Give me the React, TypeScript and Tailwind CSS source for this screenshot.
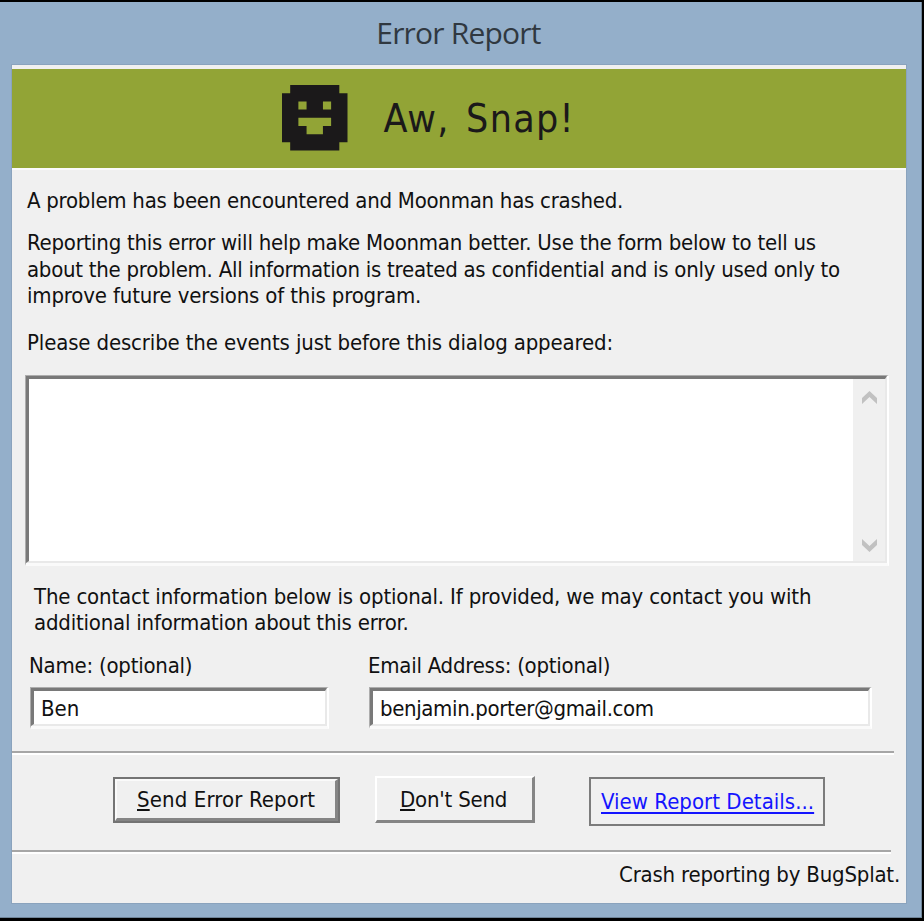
import type { ReactNode } from "react";

function Line({ className = "", children }: { className?: string; children: ReactNode }) {
  return <div className={`whitespace-nowrap ${className}`}>{children}</div>;
}

function Accel({ children }: { children: ReactNode }) {
  return (
    <span className="underline decoration-2 underline-offset-[2px] [text-decoration-skip-ink:none]">{children}</span>
  );
}

function PixelFace() {
  return (
    <svg viewBox="0 0 8 8" className="ml-[270px] mt-4 h-[65.5px] w-[65.5px] shrink-0" fill="#1b191a">
      <path
        fillRule="evenodd"
        d="M1 0H7V1H8V7H7V8H1V7H0V1H1ZM2 2V3H3V2ZM5 2V3H6V2ZM2 4V5H3V6H5V5H6V4Z"
      />
    </svg>
  );
}

function Divider({ className = "" }: { className?: string }) {
  return <div className={`h-1 shrink-0 border-b-2 border-t-2 border-b-white border-t-[#a6a6a6] ${className}`} />;
}

// Two-tone sunken bevel: a light outer frame around a darker inner one.
function Sunken({ className = "", inner = "", children }: { className?: string; inner?: string; children: ReactNode }) {
  return (
    <div className={`border-b-[3px] border-l border-r-2 border-t border-b-[#fafafa] border-l-[#adadad] border-r-white border-t-[#adadad] ${className}`}>
      <div className={`h-full border-b-2 border-l-[3px] border-r-2 border-t-[3px] border-b-[#e9e9e9] border-l-[#797979] border-r-[#e9e9e9] border-t-[#797979] bg-white ${inner}`}>
        {children}
      </div>
    </div>
  );
}

export default function App() {
  return (
    <div className="flex h-[921px] w-[924px] flex-col bg-black pr-[2px] pt-[2px] font-['DejaVu_Sans_Condensed','DejaVu_Sans',sans-serif] text-[22px] leading-[26px] text-[#111]">
      <div className="flex h-[916px] flex-col border-b border-r border-[#6f8498] bg-[#94afca] pl-[11px]">
        <div className="flex h-[62px] items-start justify-center pr-[15px] pt-[10px] font-['Open_Sans',sans-serif] text-[30px] leading-[42px] tracking-[-0.8px] text-[#303840]">
          Error Report
        </div>

        <div className="flex h-[840px] w-[896px] flex-col border border-[#8aa3bd] bg-[#f0f0f0]">
          <div className="mt-[4px] flex h-[99px] shrink-0 bg-[#92a436]">
            <PixelFace />
            <div className="ml-[36px] mt-[27px] whitespace-nowrap text-[39px] leading-[46px] tracking-[1.3px] text-[#1b191a] [word-spacing:4px]">
              Aw, Snap!
            </div>
          </div>
          <div className="h-[2px] shrink-0 bg-[#fbfbfb]" />

          <div className="ml-[15px] mt-[18px]">
            <Line className="tracking-[-0.26px]">A problem has been encountered and Moonman has crashed.</Line>
            <div className="mt-4 leading-[26.5px]">
              <Line className="tracking-[-0.238px]">Reporting this error will help make Moonman better. Use the form below to tell us</Line>
              <Line className="tracking-[-0.26px]">about the problem. All information is treated as confidential and is only used only to</Line>
              <Line className="tracking-[-0.164px]">improve future versions of this program.</Line>
            </div>
            <Line className="mt-5 tracking-[-0.148px]">Please describe the events just before this dialog appeared:</Line>
          </div>

          <Sunken className="ml-[13px] mt-[19px] h-[191px] w-[864px] shrink-0" inner="flex justify-end">
            <div className="flex w-8 flex-col items-center justify-between bg-[#f0f0f0] pb-[9px] pt-[12px]">
              <svg viewBox="0 0 15 13" className="h-[13px] w-[15px]" fill="#c1c1c1">
                <path d="M7.5 0L15 7V13L7.5 6L0 13V7Z" />
              </svg>
              <svg viewBox="0 0 15 13" className="h-[13px] w-[15px]" fill="#c1c1c1">
                <path d="M7.5 13L15 6V0L7.5 7L0 0V6Z" />
              </svg>
            </div>
          </Sunken>

          <div className="ml-[22px] mt-[18px] leading-[26.5px]">
            <Line className="tracking-[-0.175px]">The contact information below is optional. If provided, we may contact you with</Line>
            <Line className="tracking-[-0.21px]">additional information about this error.</Line>
          </div>

          <div className="mt-4 flex">
            <div className="ml-[18px] w-[339px]">
              <Line className="-ml-px tracking-[-0.23px]">Name: (optional)</Line>
              <Sunken className="mt-[8px] h-[42px] w-[299px]" inner="pl-[7px] pt-[5px]">Ben</Sunken>
            </div>
            <div>
              <Line className="-ml-px tracking-[-0.25px]">Email Address: (optional)</Line>
              <Sunken className="mt-[8px] h-[42px] w-[503px]" inner="pl-[7px] pt-[5px] tracking-[-0.36px]">
                benjamin.porter@gmail.com
              </Sunken>
            </div>
          </div>

          <Divider className="mt-[22px] w-[882px]" />

          <div className="mt-[22px] flex h-[50px] shrink-0 items-start">
            <div className="ml-[101px] h-[46px] w-[227px] border-2 border-[#747474]">
              <div className="h-[42px] border-b-[3px] border-l-2 border-r-[3px] border-t-2 border-b-[#858585] border-l-[#fafafa] border-r-[#858585] border-t-[#fafafa] pl-[20px] pt-[6px] tracking-[0.12px]">
                <Accel>S</Accel>end Error Report
              </div>
            </div>
            <div className="-mt-px ml-[35px] h-[47px] w-[160px] border-b-[3px] border-l-2 border-r-[3px] border-t-2 border-b-[#858585] border-l-white border-r-[#858585] border-t-white pl-[23px] pt-[9px] tracking-[-0.2px]">
              <Accel>D</Accel>on't Send
            </div>
            <div className="ml-[54px] h-[49px] w-[236px] border-2 border-[#7c7c7c] pl-[10px] pt-[10px] text-[#1414ff]">
              <span className="tracking-[0.03px] underline decoration-2 underline-offset-[3px] [text-decoration-skip-ink:none]">
                View Report Details...
              </span>
            </div>
          </div>

          <Divider className="mt-[23px] w-[879px]" />
          <div className="mt-[8px] flex justify-end pr-[6px]">
            <Line className="tracking-[-0.2px]">Crash reporting by BugSplat.</Line>
          </div>
        </div>
      </div>
    </div>
  );
}
